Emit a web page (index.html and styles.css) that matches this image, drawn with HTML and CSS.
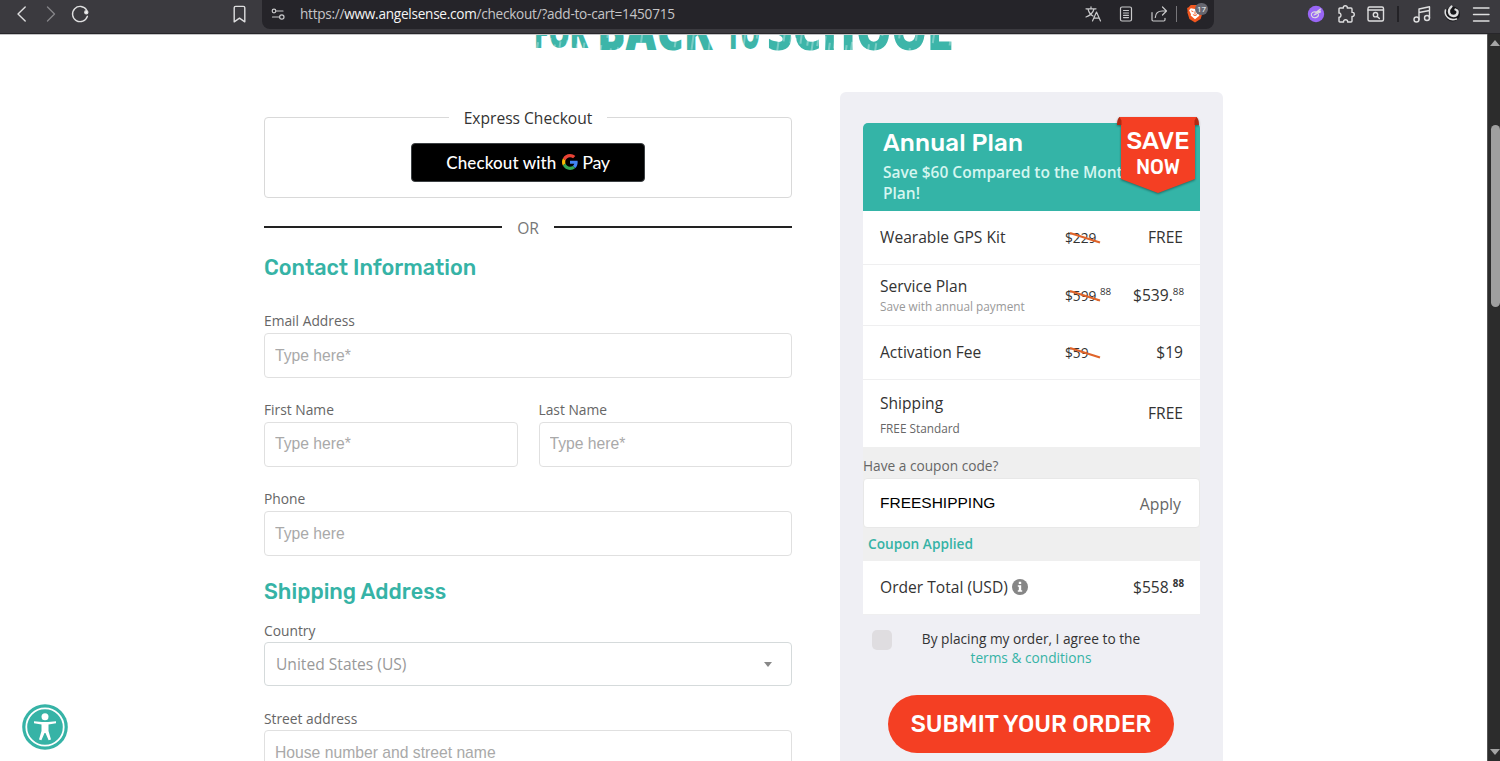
FILE: index.html
```html
<!DOCTYPE html>
<html lang="en">
<head>
    <meta charset="UTF-8">
    <meta name="viewport" content="width=device-width, initial-scale=1.0">
    <title>Checkout - AngelSense</title>
    <link rel="stylesheet" href="styles.css">
</head>
<body>
    <!-- browser bar -->
    <div class="toolbar">
        <div class="nav-icons">
            <svg class="icon" viewBox="0 0 20 20"><path d="M13.2 3L6 10l7.2 7"/></svg>
            <svg class="icon icon-off" viewBox="0 0 20 20"><path d="M6.500 3l7 7-7 7"/></svg>
            <svg class="icon" viewBox="0 0 20 20"><path d="M17.4 12.3A7.6 7.6 0 1 1 16.6 6"/><circle class="solid" cx="16.3" cy="8.3" r="1.500"/></svg>
        </div>
        <svg class="icon bookmark" viewBox="0 0 20 20"><path d="M5.2 3.8q0-1.4 1.4-1.4h7.8q1.4 0 1.4 1.4v14l-5.3-3.6-5.3 3.6z"/></svg>
        <div class="url-bar">
            <svg class="icon thin" viewBox="0 0 20 20"><circle cx="6" cy="7" r="1.800"/><path d="M8.300 7h6.700M4.500 13h6.500"/><circle cx="13.800" cy="13" r="2.200"/></svg>
            <span class="url">https://<b>www.angelsense.com</b>/checkout/?add-to-cart=1450715</span>
            <div class="url-icons">
                <svg class="icon thin" viewBox="0 0 20 20"><path d="M3 4.800h10M8 2.800v2M5 5c1 4 3 6 5 7M11 5c-1 4-4 6.500-8 8M9.500 17l4-9 4 9M11 14.200h5"/></svg>
                <svg class="icon thin" viewBox="0 0 20 20"><rect x="4.500" y="3" width="11" height="14" rx="1.500"/><path d="M7.500 6.500h5M7.500 9h5M7.500 11.300h5M7.500 13.600h5"/></svg>
                <svg class="icon thin" viewBox="0 0 20 20"><path d="M3 8.500v7.300q0 1.200 1.200 1.200h10.600q1.200 0 1.200-1.200v-1.500M6.300 13.500c.3-4.500 3-6.500 7-6.500H17M13.500 3l4 4-4 4"/></svg>
                <i class="sep light"></i>
                <div class="shield">
                    <svg viewBox="0 0 16 18"><path fill="#f1571f" d="M4 1h8l2 2 1.500.8-.5 3 .3 1-2 6.500L8 17.500 2.700 14.300.7 7.800l.3-1-.5-3L2 3z"/><path fill="#fff" d="M4 4l4 .8L12 4l1.600 2-1.800 3.600.3 1.500L8 14.500 3.900 11l.3-1.400L2.400 6z"/><path fill="none" stroke="#f1571f" stroke-width=".9" d="M4.500 6.500l2 .8M11.500 6.500l-2 .8M8 7v3M6 10l2 1 2-1"/></svg>
                    <span class="count">17</span>
                </div>
            </div>
        </div>
        <div class="ext-icons">
            <svg class="icon" viewBox="0 0 20 20"><circle cx="10" cy="10" r="8.200" fill="#9966f5" stroke="none"/><path stroke-width="1.100" d="M5.500 11.500c-1-2.500 2-4.500 5-3.500l4-3M5.500 11.500c1.500 3.500 7 2.500 7-1M8 11l6.500-3M9 9l5.500-2"/></svg>
            <svg class="icon" viewBox="0 0 20 20"><path d="M3 5q0-1 1-1h3.400C6.600 1 12 1 11.200 4H15q1 0 1 1v3.400c3-.7 3 4.700 0 4V17q0 1-1 1h-3.400c.5-3-4.500-3-4 0H4q-1 0-1-1v-3.700c2.600.4 2.600-4.600 0-4.200z"/></svg>
            <svg class="icon" viewBox="0 0 20 20"><rect x="2" y="3" width="15.500" height="14" rx="1.500"/><path d="M2 6h15.500"/><circle cx="9.500" cy="10.700" r="2.200"/><path d="M11.200 12.400l2.200 2.200"/></svg>
            <i class="sep dark"></i>
            <svg class="icon" viewBox="0 0 20 20"><circle cx="4.500" cy="15.500" r="2.500"/><circle cx="15" cy="14" r="2.500"/><path d="M7 15.500V5l10.500-2.200V14M7 8.500l10.500-2"/></svg>
            <svg class="icon" viewBox="0 0 20 20"><circle cx="10.500" cy="10" r="7.500" fill="#17171a" stroke="none"/><path stroke-width="2.300" d="M9.500 2.500C5 6.500 7 12 11.500 12c4.500 0 5.500-5.500 2-6.500"/><path stroke-width="1.600" d="M3.500 6c-1.500 6 4 11.500 11 9"/></svg>
            <svg class="icon" viewBox="0 0 20 20"><path d="M1.500 4h15.500M1.500 10.500h15.500M1.500 17h15.500"/></svg>
        </div>
    </div>

    <div class="window">
        <main class="page">
            <!-- headline, mostly scrolled away -->
            <svg class="banner" viewBox="0 0 430 20">
                <defs>
                    <pattern id="brush" width="17" height="40" patternUnits="userSpaceOnUse" patternTransform="rotate(8)">
                        <rect width="17" height="40" fill="#3db5a9"/>
                        <path stroke="#c5eae6" stroke-width=".9" d="M4 0v12M9 6v26M14 2v9"/>
                    </pattern>
                </defs>
                <g class="banner-text">
                    <text x="4" y="13" font-size="44" textLength="54" lengthAdjust="spacingAndGlyphs">FOR</text>
                    <text x="67" y="14.500" font-size="54" textLength="116" lengthAdjust="spacingAndGlyphs">BACK</text>
                    <text x="196" y="14" font-size="44" textLength="34" lengthAdjust="spacingAndGlyphs">TO</text>
                    <text x="237" y="14.500" font-size="54" textLength="186" lengthAdjust="spacingAndGlyphs">SCHOOL</text>
                </g>
            </svg>

            <div class="checkout">
                <form class="details">
                    <fieldset class="express">
                        <legend><span>Express Checkout</span></legend>
                        <button type="button" class="gpay">
                            <span class="gpay-label">Checkout with</span>
                            <svg class="g-logo" viewBox="0 0 48 48"><path fill="#ea4335" d="M24 9.500c3.540 0 6.710 1.220 9.210 3.600l6.850-6.850C35.900 2.380 30.470 0 24 0 14.620 0 6.510 5.380 2.560 13.220l7.980 6.190C12.430 13.720 17.740 9.500 24 9.500z"/><path fill="#4285f4" d="M46.980 24.550c0-1.570-.15-3.090-.38-4.550H24v9.020h12.940c-.58 2.960-2.260 5.480-4.780 7.180l7.730 6c4.510-4.180 7.090-10.360 7.090-17.650z"/><path fill="#fbbc05" d="M10.530 28.590c-.48-1.450-.76-2.990-.76-4.590s.27-3.140.76-4.590l-7.980-6.190C.92 16.460 0 20.120 0 24s.92 7.540 2.560 10.780l7.970-6.190z"/><path fill="#34a853" d="M24 48c6.480 0 11.930-2.130 15.890-5.810l-7.730-6c-2.150 1.450-4.920 2.300-8.160 2.300-6.260 0-11.570-4.220-13.470-9.910l-7.980 6.190C6.510 42.620 14.620 48 24 48z"/></svg>
                            <span class="gpay-pay">Pay</span>
                        </button>
                    </fieldset>

                    <div class="or"><span>OR</span></div>

                    <h2>Contact Information</h2>
                    <div class="field">
                        <label for="email">Email Address</label>
                        <input id="email" type="text" placeholder="Type here*">
                    </div>
                    <div class="field-row">
                        <div class="field">
                            <label for="first">First Name</label>
                            <input id="first" type="text" placeholder="Type here*">
                        </div>
                        <div class="field">
                            <label for="last">Last Name</label>
                            <input id="last" type="text" placeholder="Type here*">
                        </div>
                    </div>
                    <div class="field">
                        <label for="phone">Phone</label>
                        <input id="phone" type="text" placeholder="Type here">
                    </div>

                    <h2 class="shipping-title">Shipping Address</h2>
                    <div class="field">
                        <label>Country</label>
                        <div class="select">
                            <span>United States (US)</span>
                            <i class="caret"></i>
                        </div>
                    </div>
                    <div class="field">
                        <label for="street">Street address</label>
                        <input id="street" type="text" placeholder="House number and street name">
                    </div>
                </form>

                <aside class="summary">
                    <div class="plan">
                        <h3>Annual Plan</h3>
                        <p>Save $60 Compared to the Monthly Plan!</p>
                        <div class="ribbon">
                            <svg viewBox="0 0 84 80">
                                <path class="flag" d="M3 0h78l-2 5v57L42 76 5 62V5z"/>
                                <path class="fold" d="M3.500 0Q1 2 1 8h4.500V3.500zM80.500 0Q83 2 83 8h-4.500V3.500z"/>
                            </svg>
                            <span class="save">SAVE</span>
                            <span class="now">NOW</span>
                        </div>
                    </div>
                    <div class="line line-kit">
                        <span class="name">Wearable GPS Kit</span>
                        <span class="old">$229<svg class="strike" viewBox="0 0 32 14"><path d="M1 2l30 9.500"/></svg></span>
                        <span class="price">FREE</span>
                    </div>
                    <div class="line line-service">
                        <span class="name">Service Plan<small>Save with annual payment</small></span>
                        <span class="old">$599.<sup>88</sup><svg class="strike" viewBox="0 0 32 14"><path d="M1 2l30 9.500"/></svg></span>
                        <span class="price">$539.<sup>88</sup></span>
                    </div>
                    <div class="line line-fee">
                        <span class="name">Activation Fee</span>
                        <span class="old">$59<svg class="strike" viewBox="0 0 32 14"><path d="M1 2l30 9.500"/></svg></span>
                        <span class="price">$19</span>
                    </div>
                    <div class="line line-shipping">
                        <span class="name">Shipping<small class="method">FREE Standard</small></span>
                        <span class="price">FREE</span>
                    </div>
                    <div class="coupon">
                        <label>Have a coupon code?</label>
                        <div class="coupon-box">
                            <span class="code">FREESHIPPING</span>
                            <span class="apply">Apply</span>
                        </div>
                        <div class="applied">Coupon Applied</div>
                    </div>
                    <div class="line line-total">
                        <span class="name">Order Total (USD)
                            <svg class="info" viewBox="0 0 16 16"><circle cx="8" cy="8" r="8" fill="#868686"/><path fill="#fff" d="M6.800 2.800h2.400v2.200H6.800zM5.800 6.300h3.400v5h1v1.500H5.800v-1.500h1V7.800h-1z"/></svg>
                        </span>
                        <span class="price">$558.<sup>88</sup></span>
                    </div>
                    <div class="terms">
                        <span class="checkbox"></span>
                        <p>By placing my order, I agree to the<br><a>terms &amp; conditions</a></p>
                    </div>
                    <button type="button" class="submit">SUBMIT YOUR ORDER</button>
                </aside>
            </div>

            <svg class="accessibility" viewBox="0 0 46 46">
                <circle cx="23" cy="23" r="22.800" fill="#36b3a6"/>
                <circle cx="23" cy="23" r="18.700" fill="none" stroke="#fff" stroke-width="1.800"/>
                <circle cx="23" cy="12.700" r="3.500" fill="#fff"/>
                <path fill="#fff" d="M12 17.200l8 .8h6l8-.8v2l-7.500 1.300v6.500l2.500 8.500-2.400.8L23.500 29h-1l-3.100 7.300-2.400-.8 2.500-8.500v-6.500L12 19.200z"/>
            </svg>
        </main>
        <div class="scrollbar">
            <i class="arrow up"></i>
            <i class="thumb"></i>
            <i class="arrow down"></i>
        </div>
    </div>
</body>
</html>
```
FILE: styles.css
```css
* {
    box-sizing: border-box;
}
body {
    margin: 0;
    height: 761px;
    display: flex;
    flex-direction: column;
    overflow: hidden;
    font-family: "Open Sans", sans-serif;
    color: #333;
    background: #fff;
}

/* browser bar */
.toolbar {
    display: flex;
    align-items: flex-start;
    flex: none;
    height: 34px;
    padding-left: 12px;
    background: #3b3a3f;
    border-bottom: 1px solid #27262a;
}
.icon {
    display: block;
    flex: none;
    width: 20px;
    height: 20px;
    fill: none;
    stroke: #dededf;
    stroke-width: 1.4;
    stroke-linecap: round;
    stroke-linejoin: round;
}
.icon.thin {
    stroke: #c9c9cb;
    stroke-width: 1.2;
}
.icon .solid {
    fill: #fff;
}
.icon-off {
    stroke: #858488;
}
.nav-icons, .ext-icons {
    display: flex;
    padding-top: 4px;
    gap: 9px;
}
.bookmark {
    margin: 4px 13px 0 139px;
}
.url-bar {
    display: flex;
    align-items: center;
    width: 952px;
    height: 29px;
    padding: 0 8px 1px 6px;
    background: #252429;
    border-radius: 0 0 8px 8px;
}
.url {
    margin-left: 12px;
    padding-bottom: 1px;
    font-size: 13.6px;
    letter-spacing: -0.26px;
    color: #c5c5c7;
    white-space: nowrap;
}
.url b {
    font-weight: 400;
    color: #f4f4f4;
}
.url-icons {
    display: flex;
    align-items: center;
    gap: 13px;
    margin-left: auto;
}
.sep {
    width: 2px;
    height: 16px;
}
.sep.light {
    width: 1px;
    margin: 0 -6px;
    background: #77767a;
}
.sep.dark {
    margin: 2px 3px 0 1px;
    background: #232226;
}
.shield {
    position: relative;
    width: 18px;
    height: 20px;
    margin-right: 0;
}
.url-bar .shield {
    margin-right: 0;
    padding-left: 0;
    width: 22px;
}
.shield svg {
    display: block;
    width: 18px;
    height: 19px;
    margin-left: 2px;
}
.count {
    position: absolute;
    left: 11px;
    top: -1px;
    width: 13px;
    height: 12px;
    border-radius: 6px;
    background: #66666f;
    color: #fff;
    font-size: 8px;
    line-height: 12px;
    text-align: center;
}
.ext-icons {
    gap: 10px;
    margin-left: 92px;
}

.window {
    display: flex;
    flex: 1;
    min-height: 0;
}
.page {
    position: relative;
    width: 1487px;
    overflow: hidden;
    border-top: 1px solid #c4c4c6;
}
.scrollbar {
    display: flex;
    flex-direction: column;
    align-items: center;
    width: 13px;
    padding: 6px 0 6px 2px;
    background: #2c2c2c;
    border-left: 1px solid #555;
}
.thumb {
    width: 9px;
    height: 182px;
    margin-top: 79px;
    border-radius: 5px;
    background: #9f9f9f;
}
.arrow {
    border: 5px solid transparent;
}
.arrow.up {
    border-top: 0;
    border-bottom: 6px solid #a5a5a5;
}
.arrow.down {
    margin-top: auto;
    border-bottom: 0;
    border-top: 6px solid #a5a5a5;
}

.banner {
    display: block;
    width: 430px;
    height: 20px;
    margin-left: 530px;
}
.banner-text {
    fill: url(#brush);
    font-family: "Open Sans", sans-serif;
    font-weight: 800;
}

/* columns */
.checkout {
    display: flex;
    align-items: flex-start;
    gap: 48px;
    padding: 37px 0 0 264px;
}
.details {
    width: 528px;
    padding-top: 13px;
}
.express {
    height: 93px;
    margin: 0;
    padding: 14px 0 0;
    border: 1px solid #d9d9d9;
    border-radius: 4px;
    text-align: center;
}
.express legend {
    height: 24px;
    margin: 0 auto;
    padding: 1px 15px 0;
    font-size: 15.6px;
    line-height: 24px;
}
.gpay {
    display: flex;
    align-items: center;
    justify-content: center;
    width: 234px;
    height: 39px;
    margin: 0 auto;
    padding: 0 0 1px;
    border: 1px solid #3c4043;
    border-radius: 4px;
    background: #000;
    color: #fff;
    font-family: Lato, sans-serif;
    font-size: 17px;
}
.gpay-label {
    font-weight: 500;
    letter-spacing: 0.1px;
}
.g-logo {
    width: 16px;
    height: 16px;
    margin: 0 4px 0 6px;
}
.gpay-pay {
    font-size: 18px;
    letter-spacing: -0.4px;
}
.or {
    display: flex;
    align-items: center;
    gap: 15px;
    height: 24px;
    margin-top: 17px;
    font-size: 15.6px;
    color: #777;
}
.or span {
    padding-top: 2px;
}
.or:before, .or:after {
    content: "";
    flex: 1;
    height: 2px;
    margin-top: -1px;
    background: #222;
}
h2 {
    margin: 14px 0 29px;
    font-family: Rubik, Roboto, sans-serif;
    font-size: 21.6px;
    font-weight: 500;
    line-height: 30px;
    color: #36b3a6;
}
.field {
    flex: 1;
    margin-bottom: 23px;
}
.field-row {
    display: flex;
    gap: 21px;
}
.field label {
    display: block;
    font-size: 13.8px;
    line-height: 21px;
    color: #666;
    transform: translateY(-2px);
}
.field input, .select {
    display: block;
    width: 100%;
    height: 45px;
    padding: 0 10px;
    border: 1px solid #e0e0e0;
    border-radius: 4px;
    background: #fff;
    font-family: "Liberation Sans", Arial, sans-serif;
    font-size: 15.7px;
}
.field-row input {
    padding-bottom: 2px;
}
.field input::placeholder {
    color: #a9a9a9;
    opacity: 1;
}
.shipping-title {
    margin: -2px 0 14px;
}
.shipping-title ~ .field label {
    transform: translateY(-1px);
}
.select {
    display: flex;
    align-items: center;
    justify-content: space-between;
    height: 44px;
    padding: 0 19px 0 11px;
    border-color: #d5dadb;
    font-family: "Open Sans", sans-serif;
    font-size: 15.6px;
    color: #999;
}
.caret {
    border: 4px solid transparent;
    border-top: 5px solid #888;
    border-bottom: 0;
}

/* order summary */
.summary {
    width: 383px;
    height: 720px;
    padding: 31px 23px 0;
    background: #efeff4;
    border-radius: 6px;
}
.plan {
    position: relative;
    height: 88px;
    padding: 5px 60px 0 20px;
    background: #34b4a7;
    border-radius: 5px 5px 0 0;
    color: #fff;
}
.plan h3 {
    margin: 0;
    font-family: Rubik, Roboto, sans-serif;
    font-size: 24px;
    font-weight: 500;
    line-height: 30px;
    letter-spacing: 0.2px;
}
.plan p {
    width: 275px;
    margin: 4px 0 0;
    font-size: 15.5px;
    font-weight: 600;
    line-height: 21px;
    color: #d5f6f0;
}
.ribbon {
    position: absolute;
    top: -6px;
    right: 0;
    width: 84px;
    height: 80px;
    font-family: Rubik, Roboto, sans-serif;
    font-weight: 500;
    text-align: center;
}
.ribbon svg {
    position: absolute;
    left: 0;
    top: 0;
    filter: drop-shadow(0 1px 1px rgba(0, 0, 0, 0.4));
}
.fold {
    fill: #b32a12;
}
.flag {
    fill: #f43f23;
}
.save, .now {
    position: relative;
    display: block;
}
.save {
    padding-top: 9px;
    font-size: 24.5px;
    line-height: 30px;
}
.now {
    font-size: 20px;
    line-height: 22px;
}
.line {
    display: grid;
    grid-template-columns: 185px 50px 1fr;
    align-items: center;
    height: 54px;
    padding: 0 17px 1px;
    border-bottom: 1px solid #efeff0;
    background: #fff;
    font-size: 15.6px;
}
.line small {
    display: block;
    font-size: 11.8px;
    line-height: 18px;
    color: #999;
}
.line .method {
    margin-top: 5px;
    color: #666;
}
.line-service {
    height: 61px;
    padding-bottom: 0;
}
.line-service .name {
    padding-bottom: 1px;
}
.line-shipping {
    height: 67px;
    padding-bottom: 0;
    border-bottom: 0;
}
.line-shipping .name {
    padding-top: 2px;
}
.line-shipping .price {
    padding-bottom: 2px;
}
.old {
    position: relative;
    font-size: 13.7px;
    white-space: nowrap;
}
.strike {
    position: absolute;
    left: 4px;
    top: 3px;
    width: 32px;
    height: 14px;
    fill: none;
    stroke: #e0642a;
    stroke-width: 2.2;
}
.price {
    grid-column: 3;
    text-align: right;
    white-space: nowrap;
}
sup {
    font-size: 9.8px;
    line-height: 0;
}
.line-service .price, .line-total .price {
    margin-right: -1px;
}
.coupon {
    height: 114px;
    padding-top: 9px;
    background: #efefef;
}
.coupon label {
    display: block;
    font-size: 13.7px;
    line-height: 20px;
    color: #666;
}
.coupon-box {
    display: flex;
    align-items: center;
    justify-content: space-between;
    height: 50px;
    margin-top: 2px;
    padding: 0 18px 0 16px;
    border: 1px solid #e8e8e8;
    border-radius: 4px;
    background: #fff;
}
.code {
    font-family: "Liberation Sans", Arial, sans-serif;
    font-size: 15.5px;
    color: #000;
}
.apply {
    padding-top: 1px;
    font-size: 15.8px;
    color: #666;
}
.applied {
    padding-left: 5px;
    font-size: 13.7px;
    font-weight: 600;
    line-height: 31px;
    color: #36b3a6;
}
.line-total .name {
    white-space: nowrap;
}
.info {
    width: 16px;
    height: 16px;
    vertical-align: -2px;
}
.line-total sup {
    font-weight: 700;
}
.terms {
    display: flex;
    padding: 15px 0 0 9px;
}
.checkbox {
    width: 20px;
    height: 20px;
    border-radius: 5px;
    background: #dfdde0;
}
.terms p {
    width: 278px;
    margin: -1px 0 0;
    font-size: 13.7px;
    line-height: 19px;
    text-align: center;
}
.terms a {
    color: #36b3a6;
}
.submit {
    display: block;
    width: 286px;
    height: 58px;
    margin: 28px 0 0 25px;
    padding: 0;
    border: 0;
    border-radius: 29px;
    background: #f43f23;
    color: #fff;
    font-family: Rubik, Roboto, sans-serif;
    font-size: 23.5px;
    font-weight: 500;
}
.accessibility {
    position: absolute;
    left: 21.5px;
    top: 669px;
    width: 46px;
    height: 46px;
}
```
